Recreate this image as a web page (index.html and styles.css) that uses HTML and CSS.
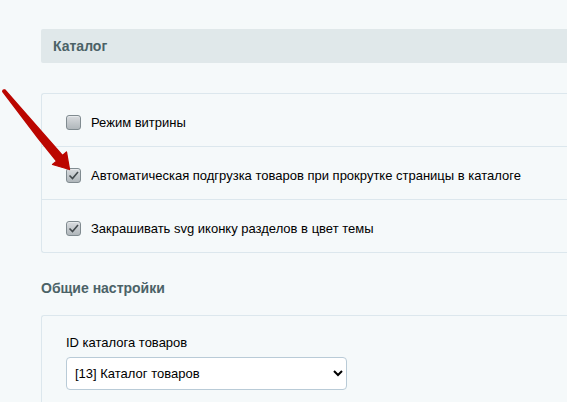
FILE: index.html
```html
<!DOCTYPE html>
<html lang="ru">
<head>
<meta charset="utf-8">
<title>Каталог</title>
<link rel="stylesheet" href="styles.css">
</head>
<body>
<main class="settings">
  <h2 class="section-title">Каталог</h2>
  <div class="panel options">
    <label class="option"><input class="check" type="checkbox"><span>Режим витрины</span></label>
    <label class="option"><input class="check" type="checkbox" checked><span>Автоматическая подгрузка товаров при прокрутке страницы в каталоге</span></label>
    <label class="option"><input class="check" type="checkbox" checked><span>Закрашивать svg иконку разделов в цвет темы</span></label>
  </div>
  <h3 class="group-title">Общие настройки</h3>
  <div class="panel fields">
    <label class="field-label" for="catalog-id">ID каталога товаров</label>
    <select class="field-select" id="catalog-id"><option>[13] Каталог товаров</option></select>
  </div>
</main>
<svg class="pointer" width="74" height="84" viewBox="0 88 74 84" aria-hidden="true">
  <path d="M2.7 91.6Q2.8 89.4 5 90L62.500 155.500L66.500 152L69.500 169.500L52.500 164.500L56.500 161.200L38 138Z" fill="#bb0600" stroke="#bb0600" stroke-width="1.300" stroke-linejoin="round"/>
</svg>
</body>
</html>
```
FILE: styles.css
```css
* { box-sizing: border-box; }
body {
  margin: 0;
  background: #f5f9fa;
  color: #000;
  font: 13px/20px "Liberation Sans", Arial, sans-serif;
}
.settings { padding: 29px 0 0 41px; }
.section-title, .group-title {
  margin: 0;
  color: #4b6267;
  font-size: 14px;
  font-weight: bold;
  line-height: 20px;
}
.section-title {
  padding: 7px 12px;
  border-radius: 2px 0 0 2px;
  background: #e0e8ea;
}
.group-title { margin: 25px 0 17px; }
.panel {
  border: 1px solid #dce7ed;
  border-right: 0;
  border-radius: 3px 0 0 3px;
}
.options { margin-top: 30px; }
.option {
  display: flex;
  align-items: center;
  gap: 10px;
  padding: 18px 24px 13px;
  line-height: 21px;
}
.option + .option { border-top: 1px solid #dce7ed; }
.check {
  appearance: none;
  flex: none;
  width: 15px;
  height: 15px;
  margin: 0;
  border: 1px solid #808b90;
  border-radius: 3px;
  background: linear-gradient(#d9dcdf, #b0b7bb);
  box-shadow: inset 0 1px #e6e9eb;
}
.check:checked {
  background:
    url("data:image/svg+xml,%3Csvg xmlns='http://www.w3.org/2000/svg' viewBox='0 0 13 13'%3E%3Cpath d='M2.500 6.500L5.500 9.500L11 3' fill='none' stroke='%23434a4d' stroke-width='1.600'/%3E%3C/svg%3E"),
    linear-gradient(#d9dcdf, #b0b7bb);
}
.fields {
  display: flex;
  flex-direction: column;
  align-items: flex-start;
  padding: 17px 24px 12px;
  border-bottom: 0;
  border-bottom-left-radius: 0;
}
.field-label { margin-bottom: 4px; }
.field-select {
  width: 281px;
  max-width: 100%;
  height: 33px;
  padding: 0 4px;
  border: 1px solid #b9cbd7;
  border-radius: 4px;
  background-color: #fff;
  color: #000;
  font: inherit;
}
.pointer { position: absolute; top: 88px; left: 0; pointer-events: none; }
```
